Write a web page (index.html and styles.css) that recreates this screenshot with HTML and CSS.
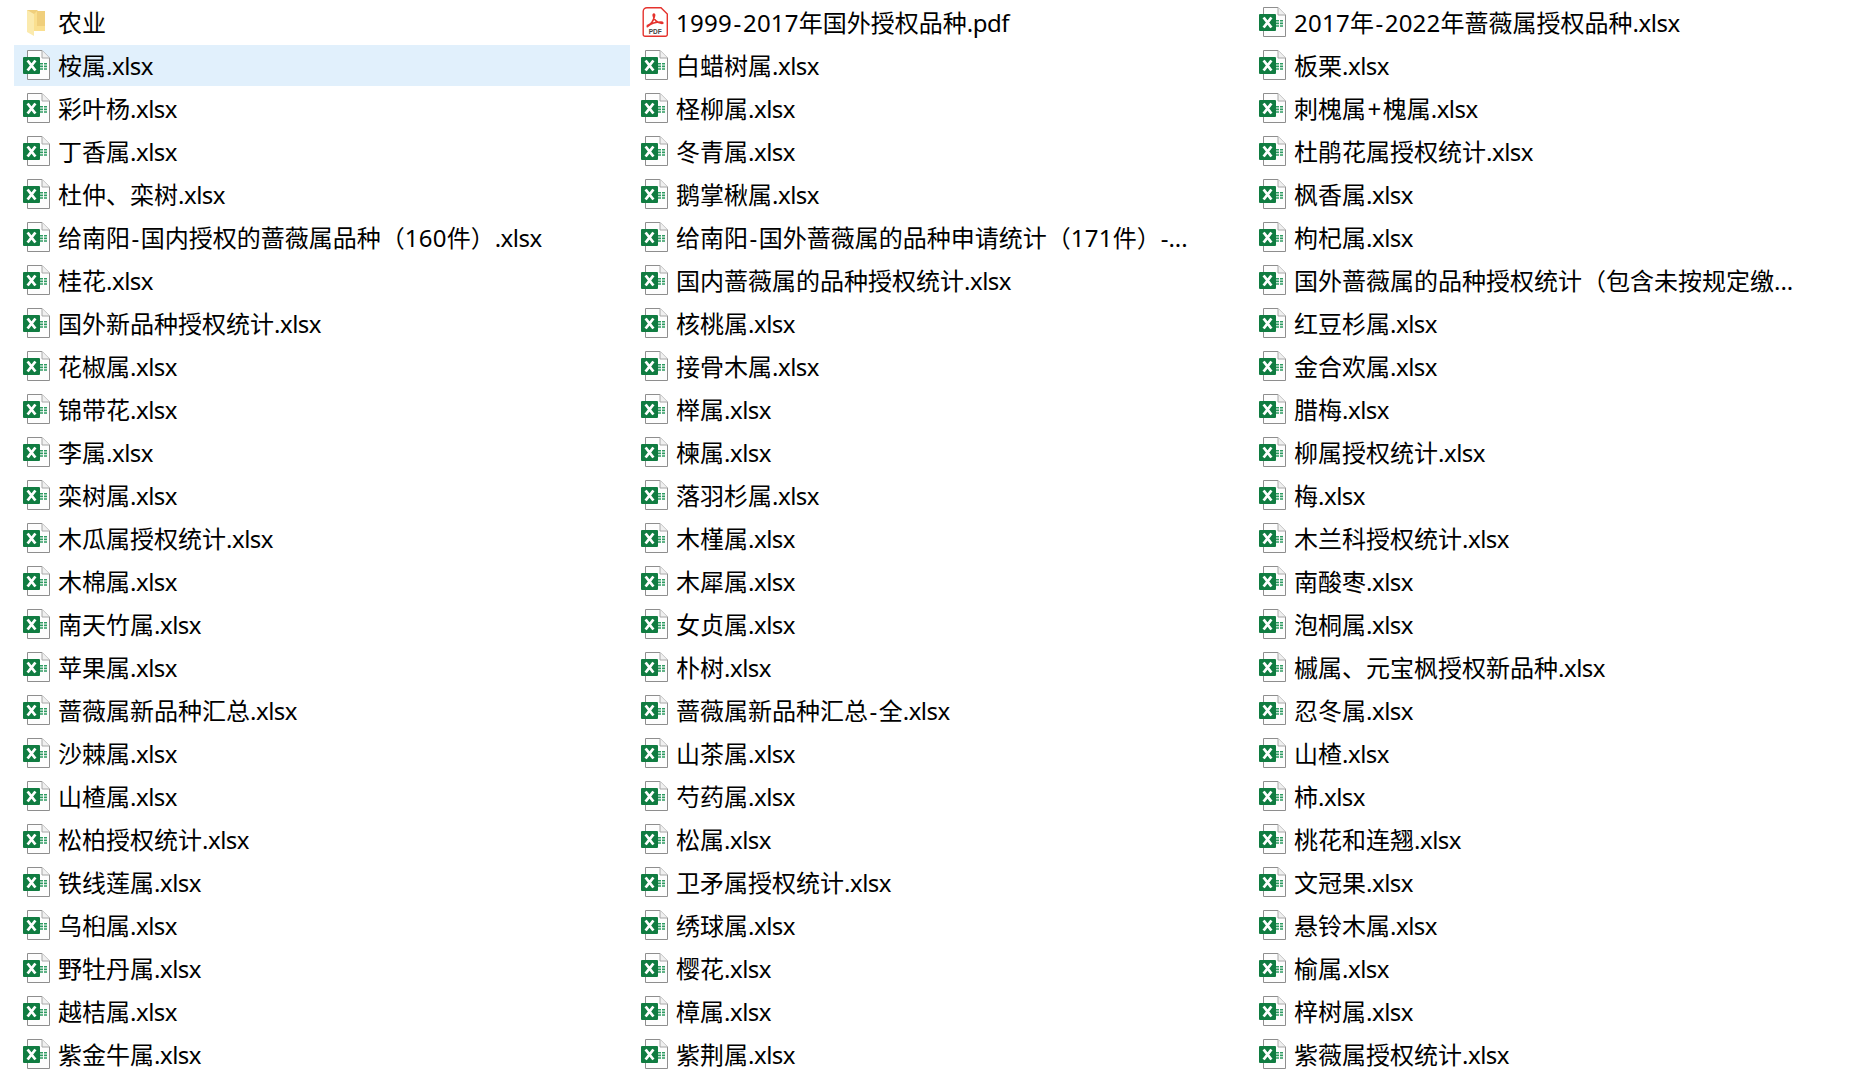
FILE: index.html
```html
<!DOCTYPE html>
<html lang="zh-CN">
<head>
  <meta charset="UTF-8">
  <title>文件列表</title>
  <link rel="stylesheet" href="styles.css">
</head>
<body>
  <svg class="sprites" width="0" height="0">
    <symbol id="xlsx" viewBox="0 0 28 30">
      <path d="M5.5 .5H20L27.5 8V29.5H5.5Z" fill="#fdfdfd" stroke="#8e8e8e"/>
      <path d="M20 .5V8H27.5" fill="#f0f0f0" stroke="#a8a8a8"/>
      <rect x="1" y="7" width="17" height="17" rx="1" fill="#107c41"/>
      <path d="M5.6 10.5L13.4 20.5M13.4 10.5L5.6 20.5" stroke="#fff" stroke-width="2.8" fill="none"/>
      <path d="M18 13h3v1.6h-3zM22 13h3v1.6h-3zM18 15.6h3v1.6h-3zM22 15.6h3v1.6h-3zM18 18.2h3v1.6h-3zM22 18.2h3v1.6h-3z" fill="#2e9b62"/>
    </symbol>
    <symbol id="folder" viewBox="0 0 28 30">
      <path d="M5 3H15L16 4H23V24H5Z" fill="#f0cf7c"/>
      <path d="M5 3L12 7V29L5 25Z" fill="#fbeaad"/>
      <path d="M12 7L15 4V19H23V24H12Z" fill="#fadf8f"/>
    </symbol>
  </svg>

  <div class="file-grid">
    <div class="file"><svg class="file-icon"><use href="#folder"/></svg><span class="name">农业</span></div>
    <div class="file">
      <svg class="file-icon" viewBox="0 0 28 30">
        <path d="M7 .7H21L27.3 7V27.5A1.8 1.8 0 0 1 25.5 29.3H5A1.8 1.8 0 0 1 3.2 27.5V4.5A3.8 3.8 0 0 1 7 .7Z" fill="#fff" stroke="#e5322d" stroke-width="1.4"/>
        <path d="M7.5 18.5C11 17.5 13.5 14 14.6 8.5C14.8 6.5 13 6.5 13.2 8.5C13.5 12 16.5 16 22 16.5C23.5 16.5 23 15 21 15C17 15 11 16.5 8 19.2C7 20.3 7.3 19.4 7.5 18.5Z" fill="none" stroke="#e5322d" stroke-width="1.6"/>
        <text x="15.2" y="26.6" class="pdf-mark">PDF</text>
      </svg>
      <span class="name"><span class="num">1999<span class="sep">-</span>2017</span>年国外授权品种<span class="ext">.pdf</span></span>
    </div>
    <div class="file"><svg class="file-icon"><use href="#xlsx"/></svg><span class="name"><span class="num">2017</span>年<span class="sep">-</span><span class="num">2022</span>年蔷薇属授权品种<span class="ext">.xlsx</span></span></div>

    <div class="file selected"><svg class="file-icon"><use href="#xlsx"/></svg><span class="name">桉属<span class="ext">.xlsx</span></span></div>
    <div class="file"><svg class="file-icon"><use href="#xlsx"/></svg><span class="name">白蜡树属<span class="ext">.xlsx</span></span></div>
    <div class="file"><svg class="file-icon"><use href="#xlsx"/></svg><span class="name">板栗<span class="ext">.xlsx</span></span></div>

    <div class="file"><svg class="file-icon"><use href="#xlsx"/></svg><span class="name">彩叶杨<span class="ext">.xlsx</span></span></div>
    <div class="file"><svg class="file-icon"><use href="#xlsx"/></svg><span class="name">柽柳属<span class="ext">.xlsx</span></span></div>
    <div class="file"><svg class="file-icon"><use href="#xlsx"/></svg><span class="name">刺槐属<span class="sep">+</span>槐属<span class="ext">.xlsx</span></span></div>

    <div class="file"><svg class="file-icon"><use href="#xlsx"/></svg><span class="name">丁香属<span class="ext">.xlsx</span></span></div>
    <div class="file"><svg class="file-icon"><use href="#xlsx"/></svg><span class="name">冬青属<span class="ext">.xlsx</span></span></div>
    <div class="file"><svg class="file-icon"><use href="#xlsx"/></svg><span class="name">杜鹃花属授权统计<span class="ext">.xlsx</span></span></div>

    <div class="file"><svg class="file-icon"><use href="#xlsx"/></svg><span class="name">杜仲、栾树<span class="ext">.xlsx</span></span></div>
    <div class="file"><svg class="file-icon"><use href="#xlsx"/></svg><span class="name">鹅掌楸属<span class="ext">.xlsx</span></span></div>
    <div class="file"><svg class="file-icon"><use href="#xlsx"/></svg><span class="name">枫香属<span class="ext">.xlsx</span></span></div>

    <div class="file"><svg class="file-icon"><use href="#xlsx"/></svg><span class="name">给南阳<span class="sep">-</span>国内授权的蔷薇属品种（<span class="num">160</span>件）<span class="ext">.xlsx</span></span></div>
    <div class="file"><svg class="file-icon"><use href="#xlsx"/></svg><span class="name">给南阳<span class="sep">-</span>国外蔷薇属的品种申请统计（<span class="num">171</span>件）-...</span></div>
    <div class="file"><svg class="file-icon"><use href="#xlsx"/></svg><span class="name">枸杞属<span class="ext">.xlsx</span></span></div>

    <div class="file"><svg class="file-icon"><use href="#xlsx"/></svg><span class="name">桂花<span class="ext">.xlsx</span></span></div>
    <div class="file"><svg class="file-icon"><use href="#xlsx"/></svg><span class="name">国内蔷薇属的品种授权统计<span class="ext">.xlsx</span></span></div>
    <div class="file"><svg class="file-icon"><use href="#xlsx"/></svg><span class="name">国外蔷薇属的品种授权统计（包含未按规定缴...</span></div>

    <div class="file"><svg class="file-icon"><use href="#xlsx"/></svg><span class="name">国外新品种授权统计<span class="ext">.xlsx</span></span></div>
    <div class="file"><svg class="file-icon"><use href="#xlsx"/></svg><span class="name">核桃属<span class="ext">.xlsx</span></span></div>
    <div class="file"><svg class="file-icon"><use href="#xlsx"/></svg><span class="name">红豆杉属<span class="ext">.xlsx</span></span></div>

    <div class="file"><svg class="file-icon"><use href="#xlsx"/></svg><span class="name">花椒属<span class="ext">.xlsx</span></span></div>
    <div class="file"><svg class="file-icon"><use href="#xlsx"/></svg><span class="name">接骨木属<span class="ext">.xlsx</span></span></div>
    <div class="file"><svg class="file-icon"><use href="#xlsx"/></svg><span class="name">金合欢属<span class="ext">.xlsx</span></span></div>

    <div class="file"><svg class="file-icon"><use href="#xlsx"/></svg><span class="name">锦带花<span class="ext">.xlsx</span></span></div>
    <div class="file"><svg class="file-icon"><use href="#xlsx"/></svg><span class="name">榉属<span class="ext">.xlsx</span></span></div>
    <div class="file"><svg class="file-icon"><use href="#xlsx"/></svg><span class="name">腊梅<span class="ext">.xlsx</span></span></div>

    <div class="file"><svg class="file-icon"><use href="#xlsx"/></svg><span class="name">李属<span class="ext">.xlsx</span></span></div>
    <div class="file"><svg class="file-icon"><use href="#xlsx"/></svg><span class="name">楝属<span class="ext">.xlsx</span></span></div>
    <div class="file"><svg class="file-icon"><use href="#xlsx"/></svg><span class="name">柳属授权统计<span class="ext">.xlsx</span></span></div>

    <div class="file"><svg class="file-icon"><use href="#xlsx"/></svg><span class="name">栾树属<span class="ext">.xlsx</span></span></div>
    <div class="file"><svg class="file-icon"><use href="#xlsx"/></svg><span class="name">落羽杉属<span class="ext">.xlsx</span></span></div>
    <div class="file"><svg class="file-icon"><use href="#xlsx"/></svg><span class="name">梅<span class="ext">.xlsx</span></span></div>

    <div class="file"><svg class="file-icon"><use href="#xlsx"/></svg><span class="name">木瓜属授权统计<span class="ext">.xlsx</span></span></div>
    <div class="file"><svg class="file-icon"><use href="#xlsx"/></svg><span class="name">木槿属<span class="ext">.xlsx</span></span></div>
    <div class="file"><svg class="file-icon"><use href="#xlsx"/></svg><span class="name">木兰科授权统计<span class="ext">.xlsx</span></span></div>

    <div class="file"><svg class="file-icon"><use href="#xlsx"/></svg><span class="name">木棉属<span class="ext">.xlsx</span></span></div>
    <div class="file"><svg class="file-icon"><use href="#xlsx"/></svg><span class="name">木犀属<span class="ext">.xlsx</span></span></div>
    <div class="file"><svg class="file-icon"><use href="#xlsx"/></svg><span class="name">南酸枣<span class="ext">.xlsx</span></span></div>

    <div class="file"><svg class="file-icon"><use href="#xlsx"/></svg><span class="name">南天竹属<span class="ext">.xlsx</span></span></div>
    <div class="file"><svg class="file-icon"><use href="#xlsx"/></svg><span class="name">女贞属<span class="ext">.xlsx</span></span></div>
    <div class="file"><svg class="file-icon"><use href="#xlsx"/></svg><span class="name">泡桐属<span class="ext">.xlsx</span></span></div>

    <div class="file"><svg class="file-icon"><use href="#xlsx"/></svg><span class="name">苹果属<span class="ext">.xlsx</span></span></div>
    <div class="file"><svg class="file-icon"><use href="#xlsx"/></svg><span class="name">朴树<span class="ext">.xlsx</span></span></div>
    <div class="file"><svg class="file-icon"><use href="#xlsx"/></svg><span class="name">槭属、元宝枫授权新品种<span class="ext">.xlsx</span></span></div>

    <div class="file"><svg class="file-icon"><use href="#xlsx"/></svg><span class="name">蔷薇属新品种汇总<span class="ext">.xlsx</span></span></div>
    <div class="file"><svg class="file-icon"><use href="#xlsx"/></svg><span class="name">蔷薇属新品种汇总<span class="sep">-</span>全<span class="ext">.xlsx</span></span></div>
    <div class="file"><svg class="file-icon"><use href="#xlsx"/></svg><span class="name">忍冬属<span class="ext">.xlsx</span></span></div>

    <div class="file"><svg class="file-icon"><use href="#xlsx"/></svg><span class="name">沙棘属<span class="ext">.xlsx</span></span></div>
    <div class="file"><svg class="file-icon"><use href="#xlsx"/></svg><span class="name">山茶属<span class="ext">.xlsx</span></span></div>
    <div class="file"><svg class="file-icon"><use href="#xlsx"/></svg><span class="name">山楂<span class="ext">.xlsx</span></span></div>

    <div class="file"><svg class="file-icon"><use href="#xlsx"/></svg><span class="name">山楂属<span class="ext">.xlsx</span></span></div>
    <div class="file"><svg class="file-icon"><use href="#xlsx"/></svg><span class="name">芍药属<span class="ext">.xlsx</span></span></div>
    <div class="file"><svg class="file-icon"><use href="#xlsx"/></svg><span class="name">柿<span class="ext">.xlsx</span></span></div>

    <div class="file"><svg class="file-icon"><use href="#xlsx"/></svg><span class="name">松柏授权统计<span class="ext">.xlsx</span></span></div>
    <div class="file"><svg class="file-icon"><use href="#xlsx"/></svg><span class="name">松属<span class="ext">.xlsx</span></span></div>
    <div class="file"><svg class="file-icon"><use href="#xlsx"/></svg><span class="name">桃花和连翘<span class="ext">.xlsx</span></span></div>

    <div class="file"><svg class="file-icon"><use href="#xlsx"/></svg><span class="name">铁线莲属<span class="ext">.xlsx</span></span></div>
    <div class="file"><svg class="file-icon"><use href="#xlsx"/></svg><span class="name">卫矛属授权统计<span class="ext">.xlsx</span></span></div>
    <div class="file"><svg class="file-icon"><use href="#xlsx"/></svg><span class="name">文冠果<span class="ext">.xlsx</span></span></div>

    <div class="file"><svg class="file-icon"><use href="#xlsx"/></svg><span class="name">乌桕属<span class="ext">.xlsx</span></span></div>
    <div class="file"><svg class="file-icon"><use href="#xlsx"/></svg><span class="name">绣球属<span class="ext">.xlsx</span></span></div>
    <div class="file"><svg class="file-icon"><use href="#xlsx"/></svg><span class="name">悬铃木属<span class="ext">.xlsx</span></span></div>

    <div class="file"><svg class="file-icon"><use href="#xlsx"/></svg><span class="name">野牡丹属<span class="ext">.xlsx</span></span></div>
    <div class="file"><svg class="file-icon"><use href="#xlsx"/></svg><span class="name">樱花<span class="ext">.xlsx</span></span></div>
    <div class="file"><svg class="file-icon"><use href="#xlsx"/></svg><span class="name">榆属<span class="ext">.xlsx</span></span></div>

    <div class="file"><svg class="file-icon"><use href="#xlsx"/></svg><span class="name">越桔属<span class="ext">.xlsx</span></span></div>
    <div class="file"><svg class="file-icon"><use href="#xlsx"/></svg><span class="name">樟属<span class="ext">.xlsx</span></span></div>
    <div class="file"><svg class="file-icon"><use href="#xlsx"/></svg><span class="name">梓树属<span class="ext">.xlsx</span></span></div>

    <div class="file"><svg class="file-icon"><use href="#xlsx"/></svg><span class="name">紫金牛属<span class="ext">.xlsx</span></span></div>
    <div class="file"><svg class="file-icon"><use href="#xlsx"/></svg><span class="name">紫荆属<span class="ext">.xlsx</span></span></div>
    <div class="file"><svg class="file-icon"><use href="#xlsx"/></svg><span class="name">紫薇属授权统计<span class="ext">.xlsx</span></span></div>
  </div>
</body>
</html>
```

FILE: styles.css
```css
body {
  margin: 0;
  background-color: #fff;
  color: #000;
  font-family: "Noto Sans", "Noto Sans CJK SC", sans-serif;
  font-size: 24px;
}

.sprites {
  position: absolute;
}

.file-grid {
  display: grid;
  grid-template-columns: repeat(3, 616px);
  grid-auto-rows: 41px;
  gap: 2px;
  padding: 2px 0 0 14px;
}

.file {
  display: flex;
  align-items: center;
  gap: 8px;
  padding: 0 0 1px 8px;
  white-space: nowrap;
}

.file.selected {
  background-color: #e1f0fc;
}

.file-icon {
  flex: none;
  width: 28px;
  height: 30px;
}

.name {
  margin-bottom: 1px;
}

.num {
  letter-spacing: 0.25px;
}

.sep {
  padding: 0 1.5px;
}

.ext {
  letter-spacing: -0.5px;
}

.pdf-mark {
  font-family: "Liberation Sans", sans-serif;
  font-size: 6.5px;
  font-weight: bold;
  fill: #444;
  text-anchor: middle;
}
```
